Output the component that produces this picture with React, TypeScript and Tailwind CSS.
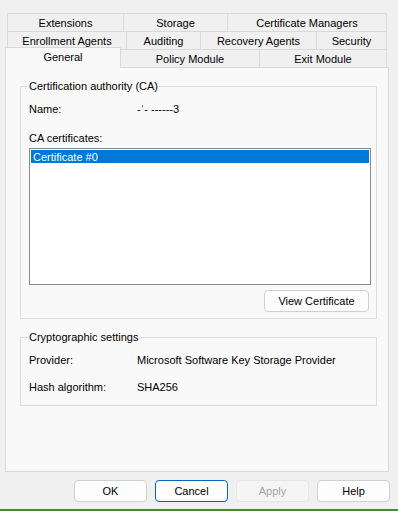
import React from "react";

const Tab = ({ label, w }: { label: string; w: number }) => (
  <div
    className="-ml-px first:ml-0 flex items-center justify-center border border-b-0 border-[#d9d9d9] bg-[#f0f0f0] h-[18px] text-black"
    style={{ width: w }}
  >
    {label}
  </div>
);

const Btn = ({ label, variant }: { label: string; variant?: "focus" | "disabled" }) => {
  const cls =
    variant === "focus"
      ? "border-[#0067c0] text-black bg-[#fdfdfd]"
      : variant === "disabled"
      ? "border-[#e6e6e6] text-[#a3a3a3] bg-[#f5f5f5]"
      : "border-[#d0d0d0] text-black bg-[#fdfdfd]";
  return (
    <div className={`w-[73px] h-[22px] flex items-center justify-center rounded-[4px] border ${cls}`}>
      {label}
    </div>
  );
};

export default function App() {
  return (
    <div
      className="w-[398px] h-[511px] bg-[#f0f0f0] flex flex-col text-[11px] leading-[14px] overflow-hidden"
      style={{ fontFamily: '"Liberation Sans", Arial, sans-serif' }}
    >
      <div className="pt-[13px] pl-[7px] flex flex-col">
        <div className="flex">
          <Tab label="Extensions" w={117} />
          <Tab label="Storage" w={105} />
          <Tab label="Certificate Managers" w={160} />
        </div>
        <div className="flex">
          <Tab label="Enrollment Agents" w={120} />
          <Tab label="Auditing" w={75} />
          <Tab label="Recovery Agents" w={117} />
          <Tab label="Security" w={71} />
        </div>
        <div className="flex items-end h-[18px] -ml-[2px]">
          <div className="relative z-10 -mb-px w-[116px] h-[21px] flex items-center justify-center border border-b-0 border-[#d9d9d9] bg-[#f9f9f9] pb-[2px]">
            General
          </div>
          <div className="-ml-px w-[140px] h-[18px] flex items-center justify-center border border-b-0 border-[#d9d9d9] bg-[#f0f0f0]">
            Policy Module
          </div>
          <div className="-ml-px w-[128px] h-[18px] flex items-center justify-center border border-b-0 border-[#d9d9d9] bg-[#f0f0f0]">
            Exit Module
          </div>
        </div>
      </div>

      <div className="ml-[5px] w-[384px] h-[405px] border border-[#d9d9d9] bg-[#f9f9f9] pl-[14px] pt-[18px]">
        {/* Group 1 */}
        <div className="relative w-[357px] h-[233px] border border-[#dcdcdc] pl-[8px] pr-[5px]">
          <div className="absolute -top-[8px] left-[7px] bg-[#f9f9f9] px-px">Certification authority (CA)</div>
          <div className="mt-[14px] flex h-[15px] items-center">
            <div className="w-[108px]">Name:</div>
            <div>-ˈ- ------3</div>
          </div>
          <div className="mt-[14px] h-[15px] flex items-center">CA certificates:</div>
          <div className="mt-[3px] w-[342px] h-[137px] border border-[#828790] bg-white p-px">
            <div className="h-[13px] bg-[#0078d7] text-white flex items-center pl-[2px]">Certificate #0</div>
          </div>
          <div className="mt-[5px] flex justify-end pr-[2px]">
            <div className="w-[105px] h-[22px] flex items-center justify-center rounded-[4px] border border-[#d0d0d0] bg-[#fdfdfd]">
              View Certificate
            </div>
          </div>
        </div>

        {/* Group 2 */}
        <div className="relative mt-[18px] w-[357px] h-[69px] border border-[#dcdcdc] pl-[8px]">
          <div className="absolute -top-[8px] left-[7px] bg-[#f9f9f9] px-px">Cryptographic settings</div>
          <div className="mt-[14px] flex h-[15px] items-center">
            <div className="w-[108px]">Provider:</div>
            <div>Microsoft Software Key Storage Provider</div>
          </div>
          <div className="mt-[12px] flex h-[15px] items-center">
            <div className="w-[108px]">Hash algorithm:</div>
            <div>SHA256</div>
          </div>
        </div>
      </div>

      <div className="mt-[8px] flex justify-end gap-[8px] pr-[8px]">
        <Btn label="OK" />
        <Btn label="Cancel" variant="focus" />
        <Btn label="Apply" variant="disabled" />
        <Btn label="Help" />
      </div>
      <div className="mt-auto h-[2px] bg-[#4d8c0e]" />
    </div>
  );
}
